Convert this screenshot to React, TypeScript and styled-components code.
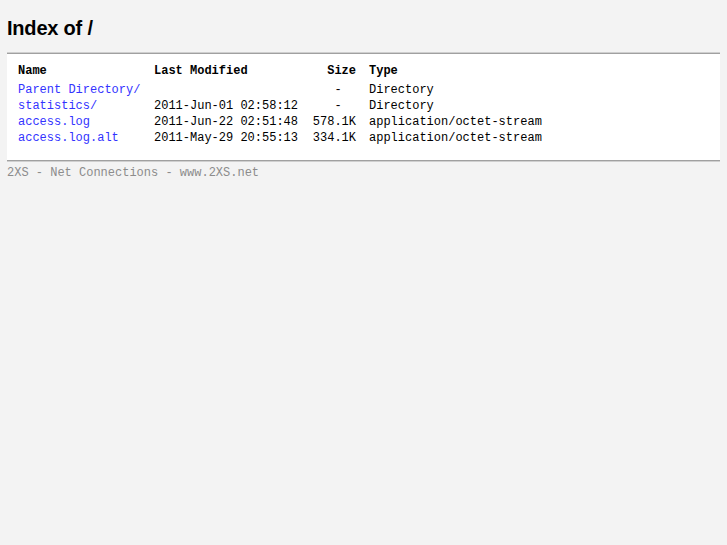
import styled, { createGlobalStyle } from 'styled-components'

const GlobalStyle = createGlobalStyle`
  html, body {
    margin: 0;
    background: #f3f3f3;
  }
  body {
    padding: 0 7px;
    font-family: "Liberation Mono", "Courier New", monospace;
  }
`

const Title = styled.h1`
  margin: 0;
  padding: 17px 0 13px;
  font-family: "Liberation Sans", Arial, sans-serif;
  font-size: 20px;
  line-height: 22px;
  font-weight: bold;
  letter-spacing: -0.2px;
  color: #000;
`

const Listing = styled.div`
  display: grid;
  grid-template-columns: 136px 156px 46px auto;
  align-content: start;
  padding: 9px 11px 14px;
  margin-top: 1px;
  background: #fff;
  border-top: 1px solid #a0a0a0;
  border-bottom: 1px solid #a0a0a0;
  box-shadow: 0 -1px 0 #cfcfcf, 0 1px 0 #cfcfcf;
`

interface CellProps {
  $align?: 'left' | 'right'
  $head?: boolean
}

const Cell = styled.div<CellProps>`
  height: 16px;
  margin-bottom: ${({ $head }: CellProps) => ($head ? '3px' : '0')};
  font-size: 12px;
  line-height: 16px;
  white-space: pre;
  color: #000;
  text-align: ${({ $align }: CellProps) => ($align === 'right' ? 'right' : 'left')};
  font-weight: ${({ $head }: CellProps) => ($head ? 'bold' : 'normal')};
`

const TypeCell = styled(Cell)`
  padding-left: 13px;
`

const Link = styled.a`
  color: #3333ff;
  text-decoration: none;
`

const Footer = styled.div`
  padding-top: 5px;
  font-size: 12px;
  line-height: 14px;
  color: #8c8c8c;
`

const rows = [
  { name: 'Parent Directory/', modified: '', size: '-', type: 'Directory' },
  { name: 'statistics/', modified: '2011-Jun-01 02:58:12', size: '-', type: 'Directory' },
  { name: 'access.log', modified: '2011-Jun-22 02:51:48', size: '578.1K', type: 'application/octet-stream' },
  { name: 'access.log.alt', modified: '2011-May-29 20:55:13', size: '334.1K', type: 'application/octet-stream' },
]

export default function App() {
  return (
    <>
      <GlobalStyle />
      <Title>Index of /</Title>
      <Listing>
        <Cell $head>Name</Cell>
        <Cell $head>Last Modified</Cell>
        <Cell $head $align="right">Size</Cell>
        <TypeCell $head>Type</TypeCell>
        {rows.map((r) => [
          <Cell key={r.name + 'n'}>
            <Link href="#">{r.name}</Link>
          </Cell>,
          <Cell key={r.name + 'm'}>{r.modified}</Cell>,
          <Cell key={r.name + 's'} $align="right">
            {r.size === '-' ? '-  ' : r.size}
          </Cell>,
          <TypeCell key={r.name + 't'}>{r.type}</TypeCell>,
        ])}
      </Listing>
      <Footer>2XS - Net Connections - www.2XS.net</Footer>
    </>
  )
}
